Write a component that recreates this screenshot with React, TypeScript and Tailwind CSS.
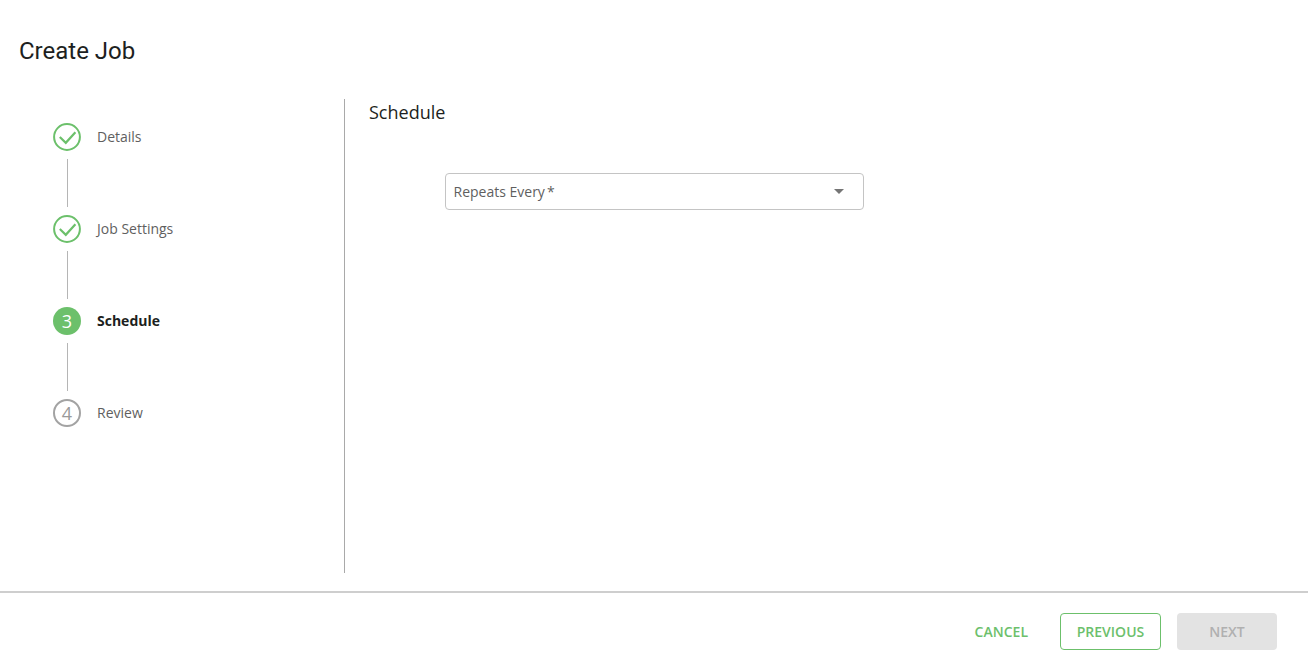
import { Fragment } from 'react';

const steps = [
  { label: 'Details', state: 'done', num: 1 },
  { label: 'Job Settings', state: 'done', num: 2 },
  { label: 'Schedule', state: 'active', num: 3 },
  { label: 'Review', state: 'todo', num: 4 },
];

function StepIcon({ state, num }: { state: string; num: number }) {
  if (state === 'done') {
    return (
      <svg className="w-7 h-7 shrink-0" viewBox="0 0 28 28" fill="none">
        <circle cx="14" cy="14" r="12.9" stroke="#6cc06b" strokeWidth="2" />
        <path d="M6.8 14l6 5.8L22.4 9.2" stroke="#6cc06b" strokeWidth="2.2" />
      </svg>
    );
  }
  if (state === 'active') {
    return (
      <div className="w-7 h-7 shrink-0 rounded-full bg-[#6cc06b] flex items-center justify-center text-white text-[18px] leading-none">
        {num}
      </div>
    );
  }
  return (
    <div className="w-7 h-7 shrink-0 rounded-full border-2 border-[#a3a3a3] flex items-center justify-center text-[#9a9a9a] text-[18px] leading-none">
      {num}
    </div>
  );
}

export default function App() {
  return (
    <div className="w-[1308px] h-[661px] bg-white overflow-hidden font-['Open_Sans',sans-serif] text-[#5f5f5f]">
      <header className="h-[99px] flex items-center pl-[19px] pt-[2px]">
        <h1 className="text-[24px] leading-none text-[#1d1f21] font-['Roboto',sans-serif]">Create Job</h1>
      </header>

      <div className="flex h-[474px]">
        <aside className="w-[345px] shrink-0 border-r border-[#a9a9a9] pt-6 pl-[53px]">
          {steps.map((step, i) => (
            <Fragment key={step.label}>
              <div className="flex items-center gap-4 h-7">
                <StepIcon state={step.state} num={step.num} />
                <span
                  className={
                    step.state === 'active'
                      ? 'text-[14px] font-bold text-[#1d1f21] -mt-[2px]'
                      : 'text-[14px] -mt-[2px]'
                  }
                >
                  {step.label}
                </span>
              </div>
              {i < steps.length - 1 && <div className="w-px h-12 my-2 ml-[14px] bg-[#b5b5b5]" />}
            </Fragment>
          ))}
        </aside>

        <main className="flex-1 pl-6">
          <h2 className="text-[18px] leading-[26px] text-[#1d1f21]">Schedule</h2>
          <div className="ml-[76px] mt-[48px] w-[419px] h-[37px] border border-[#c4c4c4] rounded flex items-center justify-between pl-[7.5px] pr-[19px]">
            <span className="text-[14px] flex">
              Repeats Every<span className="ml-[2px]">*</span>
            </span>
            <span className="w-0 h-0 border-x-[5px] border-x-transparent border-t-[5px] border-t-[#757575]" />
          </div>
        </main>
      </div>

      <footer className="mt-[18px] border-t-2 border-[#cecece] h-[69px] flex items-start justify-end pt-5 pr-[31px]">
        <button className="h-[37px] mr-[16px] px-0 text-[14px] font-semibold text-[#6cc06b]">CANCEL</button>
        <button className="ml-4 w-[101px] h-[37px] border border-[#6cc06b] rounded text-[14px] font-semibold text-[#6cc06b]">PREVIOUS</button>
        <button className="ml-4 w-[100px] h-[37px] rounded bg-[#e3e3e3] text-[14px] font-semibold text-[#b0b0b0]">NEXT</button>
      </footer>
    </div>
  );
}
